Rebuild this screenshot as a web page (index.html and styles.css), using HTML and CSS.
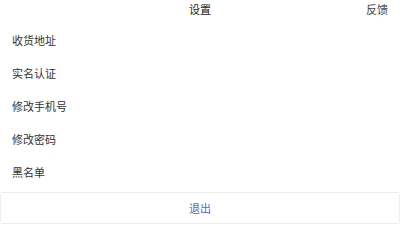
FILE: index.html
```html
<!DOCTYPE html>
<html lang="zh">
<head>
<meta charset="utf-8">
<link rel="stylesheet" href="styles.css">
</head>
<body>
<div class="page">
  <header class="topbar">
    <span class="side"></span>
    <span class="title">设置</span>
    <span class="side right">反馈</span>
  </header>
  <ul class="menu">
    <li class="row">收货地址</li>
    <li class="row">实名认证</li>
    <li class="row">修改手机号</li>
    <li class="row">修改密码</li>
    <li class="row">黑名单</li>
  </ul>
  <div class="logout">退出</div>
</div>
</body>
</html>
```
FILE: styles.css
```css
* { box-sizing: border-box; }
html, body { margin: 0; padding: 0; background: #fff; }
body {
  font-family: "Noto Sans CJK SC", "Noto Sans", sans-serif;
  font-size: 11px;
  color: #333;
  width: 400px;
  height: 225px;
  overflow: hidden;
}
.page { display: flex; flex-direction: column; }
.topbar {
  height: 17px;
  display: grid;
  grid-template-columns: 1fr auto 1fr;
  align-items: center;
}
.title { color: #222; text-align: center; }
.side.right { justify-self: end; padding-right: 12px; color: #444; }
.menu { list-style: none; margin: 7px 0 0; padding: 0; }
.row {
  height: 33px;
  line-height: 33px;
  padding-left: 12px;
  color: #333;
}
.logout {
  margin-top: 3px;
  height: 32px;
  border: 1px solid #eeeeee;
  border-radius: 2px;
  display: flex;
  align-items: center;
  justify-content: center;
  color: #5c5cf0;
}
```
